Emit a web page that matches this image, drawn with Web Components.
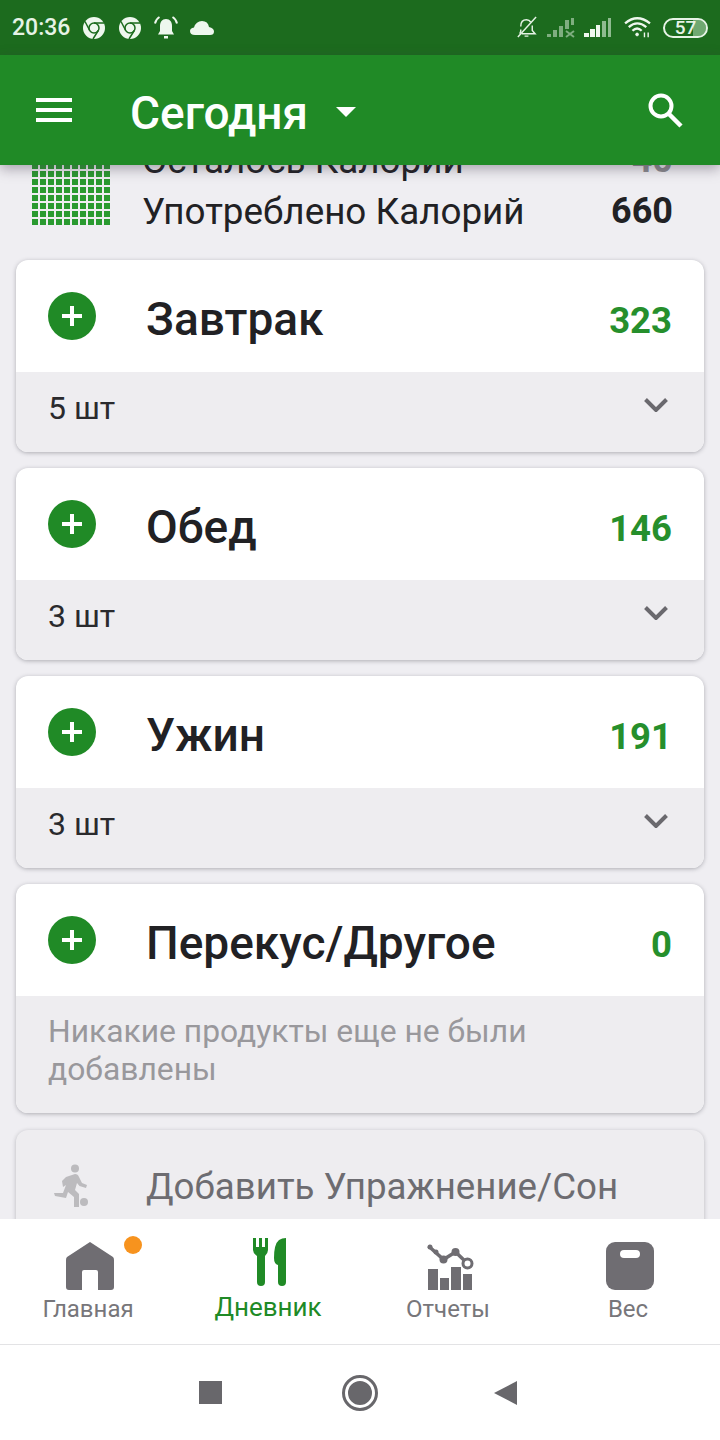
<!DOCTYPE html>
<html>
<head>
<meta charset="utf-8">
<style>
html, body { margin: 0; padding: 0; height: 100%; }
body { width: 720px; height: 1440px; overflow: hidden; display: flex; flex-direction: column; background: #efeef2; font-family: Roboto, "Noto Sans", sans-serif; color: #212124; }
diary-main { flex: 1; min-height: 0; }
</style>
</head>
<body>
<status-bar></status-bar>
<top-bar title="Сегодня"></top-bar>
<diary-main>
  <calorie-summary></calorie-summary>
  <meal-card name="Завтрак" kcal="323" count="5 шт"></meal-card>
  <meal-card name="Обед" kcal="146" count="3 шт"></meal-card>
  <meal-card name="Ужин" kcal="191" count="3 шт"></meal-card>
  <meal-card name="Перекус/Другое" kcal="0" empty="Никакие продукты еще не были добавлены"></meal-card>
  <exercise-card></exercise-card>
</diary-main>
<bottom-nav>
  <nav-tab label="Главная" badge>
    <svg viewBox="0 0 48 48" width="48" height="48"><path fill="#6f6d72" fill-rule="evenodd" d="M24 0 L47 15 Q48 16 48 18 V45 Q48 48 45 48 H32 V30 Q32 28 30 28 H18 Q16 28 16 30 V48 H3 Q0 48 0 45 V18 Q0 16 1 15 Z"/></svg>
  </nav-tab>
  <nav-tab label="Дневник" active>
    <svg viewBox="0 0 48 48" width="48" height="48"><path fill="#208a26" d="M7 0 H10 V9 H13 V0 H16 V9 H19 V0 H22 V12 Q22 15 19 18 V44 Q19 48 15 48 Q11 48 11 44 V18 Q7 15 7 12 Z M28 20 Q28 6 33 2 Q36 0 40 0 V44 Q40 48 36 48 Q32 48 32 44 V27 Q28 26 28 20 Z"/></svg>
  </nav-tab>
  <nav-tab label="Отчеты">
    <svg viewBox="0 0 48 48" width="48" height="48"><g fill="#6f6d72"><rect x="2" y="27" width="10" height="21"/><rect x="14" y="36" width="9" height="12"/><rect x="25" y="25" width="10" height="23"/><rect x="37" y="32" width="9" height="16"/><circle cx="4" cy="5" r="2.500"/><circle cx="10" cy="10" r="2.500"/><circle cx="17.500" cy="17.500" r="4"/><circle cx="29.500" cy="10" r="4"/></g><path d="M2.500 4 L17.500 17.500 L29.500 10 L41 21" fill="none" stroke="#6f6d72" stroke-width="3.500"/><circle cx="41.500" cy="21.500" r="4.500" fill="#fff" stroke="#6f6d72" stroke-width="3"/></svg>
  </nav-tab>
  <nav-tab label="Вес">
    <svg viewBox="0 0 48 48" width="48" height="48"><rect width="48" height="48" rx="9" fill="#6f6d72"/><rect x="14" y="8" width="20" height="8" rx="4" fill="#fff"/></svg>
  </nav-tab>
</bottom-nav>
<system-nav></system-nav>

<script>
class StatusBar extends HTMLElement {
    constructor() {
        super();
        this.attachShadow({mode: 'open'});
    }
    connectedCallback() {
        const chrome = `<svg viewBox="0 0 24 24" width="24" height="24"><circle cx="12" cy="12" r="11" fill="#eef7ee"/><circle cx="12" cy="12" r="5" fill="#eef7ee" stroke="#1c6b1e" stroke-width="1.500"/><path d="M12 7 H22 M7.700 14.500 L3 5.500 M16.300 14.500 L11 23" stroke="#1c6b1e" stroke-width="1.500" fill="none"/></svg>`;
        this.shadowRoot.innerHTML = `
            <style>
            :host { display: flex; align-items: center; height: 55px; flex: none; background: #1c6b1e; color: #e6f3e6; padding: 0 12px; box-sizing: border-box; }
            .time { font-size: 23px; font-weight: 500; width: 70px; }
            .left { display: flex; align-items: center; gap: 12px; }
            .right { margin-left: auto; display: flex; align-items: center; }
            svg { display: block; }
            .batt { width: 45px; height: 20px; box-sizing: border-box; border: 2px solid #e6f3e6; border-radius: 10px; margin-left: 11px; font-size: 19px; font-weight: 500; display: flex; align-items: center; justify-content: center; line-height: 1; background: linear-gradient(to right, transparent 0 68%, #6fa871 68%); background-clip: padding-box; }
            </style>
            <div class="time">20:36</div>
            <div class="left">
                ${chrome}${chrome}
                <svg viewBox="0 0 24 24" width="24" height="24" fill="#eef7ee"><path d="M12 3 C8 3 6 6 6 10 V15 L4 18.500 H20 L18 15 V10 C18 6 16 3 12 3 Z M10 20 H14 V22.500 H10 Z"/><path d="M5.500 1 Q2 3 1 7.500 M18.500 1 Q22 3 23 7.500" stroke="#eef7ee" stroke-width="2" fill="none"/></svg>
                <svg viewBox="0 0 24 14" width="24" height="14" fill="#eef7ee"><path d="M5 14 Q0 14 0 10 Q0 7 4 6.500 Q6 0 12 0 Q18 0 19 6 Q24 7 24 10.500 Q24 14 20 14 Z"/></svg>
            </div>
            <div class="right">
                <svg viewBox="0 0 24 24" width="23" height="23" fill="none" stroke="#e6f3e6" stroke-width="1.500"><path d="M6 11 C6 7 8 4 12 4 C14 4 15.500 5 16.500 6.500 M18 10 V15 L21 18.500 H7 M5 18.500 L6 16 V14 M10 21 H14"/><path d="M3 22 L22 1"/></svg>
                <svg viewBox="0 0 28 20" width="28" height="20" style="margin-left:9px"><g fill="#7fae80"><rect x="0" y="16" width="4" height="3"/><rect x="6" y="12" width="4" height="7"/><rect x="12" y="8" width="4" height="11"/><rect x="18" y="2" width="4" height="9"/><rect x="24" y="0" width="3" height="7"/></g><path d="M19 13 L27 19 M27 13 L19 19" stroke="#7fae80" stroke-width="2"/></svg>
                <svg viewBox="0 0 28 20" width="28" height="20" style="margin-left:9px"><g fill="#eef7ee"><rect x="0" y="15" width="5" height="4"/><rect x="6" y="11" width="5" height="8"/><rect x="12" y="7" width="4" height="12"/></g><g fill="#8fbb90"><rect x="18" y="3" width="4" height="16"/><rect x="24" y="0" width="3" height="19"/></g></svg>
                <svg viewBox="0 0 30 26" width="28" height="24" style="margin-left:12px" fill="none" stroke="#eef7ee" stroke-width="2.500"><path d="M1 8 Q14 -3 28 8"/><path d="M5 12 Q14 4 24 12"/><path d="M9 16 Q14 11 19 16"/><circle cx="14" cy="20" r="1.500" fill="#eef7ee" stroke-width="1"/><path d="M22 18 V23 M26 18 V23" stroke-width="1.500"/></svg>
                <div class="batt">57</div>
            </div>`;
    }
}

class TopBar extends HTMLElement {
    constructor() {
        super();
        this.attachShadow({mode: 'open'});
    }
    connectedCallback() {
        this.shadowRoot.innerHTML = `
            <style>
            :host { display: flex; align-items: center; flex: none; height: 110px; box-sizing: border-box; padding: 0 37px 0 36px; background: #208a26; color: #fff; position: relative; z-index: 2; box-shadow: 0 4px 12px rgba(60,50,70,.4); }
            .menu { width: 36px; height: 24px; display: flex; flex-direction: column; justify-content: space-between; }
            .menu i { display: block; height: 4px; background: #fff; }
            h1 { margin: 5px 0 0 58px; font-size: 46px; font-weight: 500; line-height: 1; color: #fdfffd; }
            .caret { width: 0; height: 0; border: 10px solid transparent; border-top-color: #fff; border-bottom-width: 0; margin: 4px 0 0 28px; }
            svg { margin-left: auto; display: block; }
            </style>
            <div class="menu"><i></i><i></i><i></i></div>
            <h1>${this.getAttribute('title')}</h1>
            <div class="caret"></div>
            <svg viewBox="0 0 35 35" width="35" height="35" fill="none" stroke="#fff"><circle cx="13" cy="13" r="10.500" stroke-width="4"/><path d="M20.500 20.500 L33 33" stroke-width="4.500"/></svg>`;
    }
}

class DiaryMain extends HTMLElement {
    constructor() {
        super();
        this.attachShadow({mode: 'open'});
    }
    connectedCallback() {
        this.shadowRoot.innerHTML = `
            <style>
            :host { display: block; overflow: hidden; background: #efeef2; }
            .list { display: flex; flex-direction: column; gap: 16px; margin-top: -31px; padding: 0 16px; }
            </style>
            <div class="list"><slot></slot></div>`;
    }
}

class CalorieSummary extends HTMLElement {
    constructor() {
        super();
        this.attachShadow({mode: 'open'});
    }
    connectedCallback() {
        this.shadowRoot.innerHTML = `
            <style>
            :host { display: flex; align-items: flex-end; height: 103px; padding: 0 31px 0 16px; margin-bottom: 7px; font-size: 36.800px; line-height: 51px; }
            .grid { width: 78px; height: 78px; flex: none; margin-bottom: 12px; background:
                linear-gradient(to right, transparent 6px, #efeef2 6px) 0 0 / 8px 8px,
                linear-gradient(to bottom, transparent 6px, #efeef2 6px) 0 0 / 8px 8px,
                #2a9a30; }
            .rows { flex: 1; margin-left: 32px; }
            .row { display: flex; justify-content: space-between; }
            b { font-weight: 700; font-size: 36px; }
            .muted { color: #8b8a8e; }
            </style>
            <div class="grid"></div>
            <div class="rows">
                <div class="row"><span>Осталось Калорий</span><b class="muted">40</b></div>
                <div class="row"><span>Употреблено Калорий</span><b>660</b></div>
            </div>`;
    }
}

class MealCard extends HTMLElement {
    constructor() {
        super();
        this.attachShadow({mode: 'open'});
    }
    connectedCallback() {
        const empty = this.getAttribute('empty');
        const foot = empty
            ? `<div class="foot empty">${empty}</div>`
            : `<div class="foot"><span>${this.getAttribute('count')}</span>
               <svg viewBox="0 0 24 14" width="24" height="14" fill="none" stroke="#6a696e" stroke-width="4"><path d="M1.500 1.500 L12 12 L22.500 1.500"/></svg></div>`;
        this.shadowRoot.innerHTML = `
            <style>
            :host { display: block; border-radius: 12px; overflow: hidden; background: #fff; box-shadow: 0 1px 4px rgba(50,50,60,.35); }
            .head { display: flex; align-items: center; height: 112px; box-sizing: border-box; padding: 0 32px; }
            .plus { width: 48px; height: 48px; border-radius: 50%; background: #208a26; flex: none; position: relative; }
            .plus::before, .plus::after { content: ""; position: absolute; background: #fff; }
            .plus::before { left: 14px; right: 14px; top: 22px; height: 4px; }
            .plus::after { top: 14px; bottom: 14px; left: 22px; width: 4px; }
            .name { margin: 6px 0 0 50px; font-size: 46px; font-weight: 500; color: #212124; line-height: 1; }
            .kcal { margin: 8px 0 0 auto; font-size: 36.500px; font-weight: 700; color: #268f2c; }
            .foot { background: #eeedf0; display: flex; justify-content: space-between; font-size: 32px; line-height: 38px; padding: 17px 32px 25px; color: #2a2a2d; }
            .foot svg { margin: 9px 4px 0 0; }
            .empty { display: block; padding-top: 16px; padding-right: 140px; font-size: 31.800px; color: #99989c; }
            </style>
            <div class="head">
                <div class="plus"></div>
                <div class="name">${this.getAttribute('name')}</div>
                <div class="kcal">${this.getAttribute('kcal')}</div>
            </div>
            ${foot}`;
    }
}

class ExerciseCard extends HTMLElement {
    constructor() {
        super();
        this.attachShadow({mode: 'open'});
    }
    connectedCallback() {
        this.shadowRoot.innerHTML = `
            <style>
            :host { display: flex; align-items: center; height: 112px; margin-top: 1px; padding: 0 32px 0 38px; border-radius: 12px; background: #eeedf0; box-shadow: 0 1px 4px rgba(50,50,60,.3); font-size: 36.700px; color: #6d6c71; }
            svg { flex: none; display: block; }
            span { margin-left: 58px; }
            </style>
            <svg viewBox="0 0 34 44" width="34" height="44" fill="#bcbbbe"><circle cx="21" cy="4.500" r="4"/><circle cx="30" cy="38" r="4"/><path d="M12 13 L21 10 Q24 10 25 13 L28 19 L33 21 L32 24 L25.500 22 L23 19 L21 26 L25 30 V43 H20 V33 L14 28 L12 34 L1 32 L0 29 L9 29 L12 21 L9 23 L8 17 Z"/></svg>
            <span>Добавить Упражнение/Сон</span>`;
    }
}

class BottomNav extends HTMLElement {
    constructor() {
        super();
        this.attachShadow({mode: 'open'});
    }
    connectedCallback() {
        this.shadowRoot.innerHTML = `
            <style>
            :host { display: block; flex: none; height: 126px; box-sizing: border-box; background: #fff; border-bottom: 1px solid #e3e3e5; position: relative; z-index: 2; }
            .tabs { display: grid; grid-template-columns: repeat(4, 180px); }
            </style>
            <div class="tabs"><slot></slot></div>`;
    }
}

class NavTab extends HTMLElement {
    constructor() {
        super();
        this.attachShadow({mode: 'open'});
    }
    connectedCallback() {
        this.shadowRoot.innerHTML = `
            <style>
            :host { display: flex; flex-direction: column; align-items: center; padding-top: 23px; font-size: 24px; color: #77767a; position: relative; }
            :host([active]) { padding-top: 19px; font-size: 26px; color: #208a26; }
            .icon { width: 48px; height: 48px; }
            .label { line-height: 28px; margin: 5px 4px 0 0; }
            :host([active]) .label { margin-top: 7px; }
            .badge { position: absolute; top: 17px; left: 124px; width: 18px; height: 18px; border-radius: 50%; background: #f7931e; }
            </style>
            <div class="icon"><slot></slot></div>
            <div class="label">${this.getAttribute('label')}</div>
            ${this.hasAttribute('badge') ? '<div class="badge"></div>' : ''}`;
    }
}

class SystemNav extends HTMLElement {
    constructor() {
        super();
        this.attachShadow({mode: 'open'});
    }
    connectedCallback() {
        this.shadowRoot.innerHTML = `
            <style>
            :host { display: flex; flex: none; height: 95px; align-items: center; background: #fff; padding: 0 203px 0 199px; justify-content: space-between; }
            .square { width: 23px; height: 23px; background: #68676b; }
            .circle { width: 24px; height: 24px; border-radius: 50%; background: #68676b; border: 3px solid #fff; outline: 3px solid #68676b; margin-left: 3px; }
            .back { width: 0; height: 0; border: 12.500px solid transparent; border-right: 23px solid #68676b; border-left-width: 0; }
            </style>
            <div class="square"></div>
            <div class="circle"></div>
            <div class="back"></div>`;
    }
}

customElements.define('status-bar', StatusBar);
customElements.define('top-bar', TopBar);
customElements.define('diary-main', DiaryMain);
customElements.define('calorie-summary', CalorieSummary);
customElements.define('meal-card', MealCard);
customElements.define('exercise-card', ExerciseCard);
customElements.define('bottom-nav', BottomNav);
customElements.define('nav-tab', NavTab);
customElements.define('system-nav', SystemNav);
</script>
</body>
</html>
